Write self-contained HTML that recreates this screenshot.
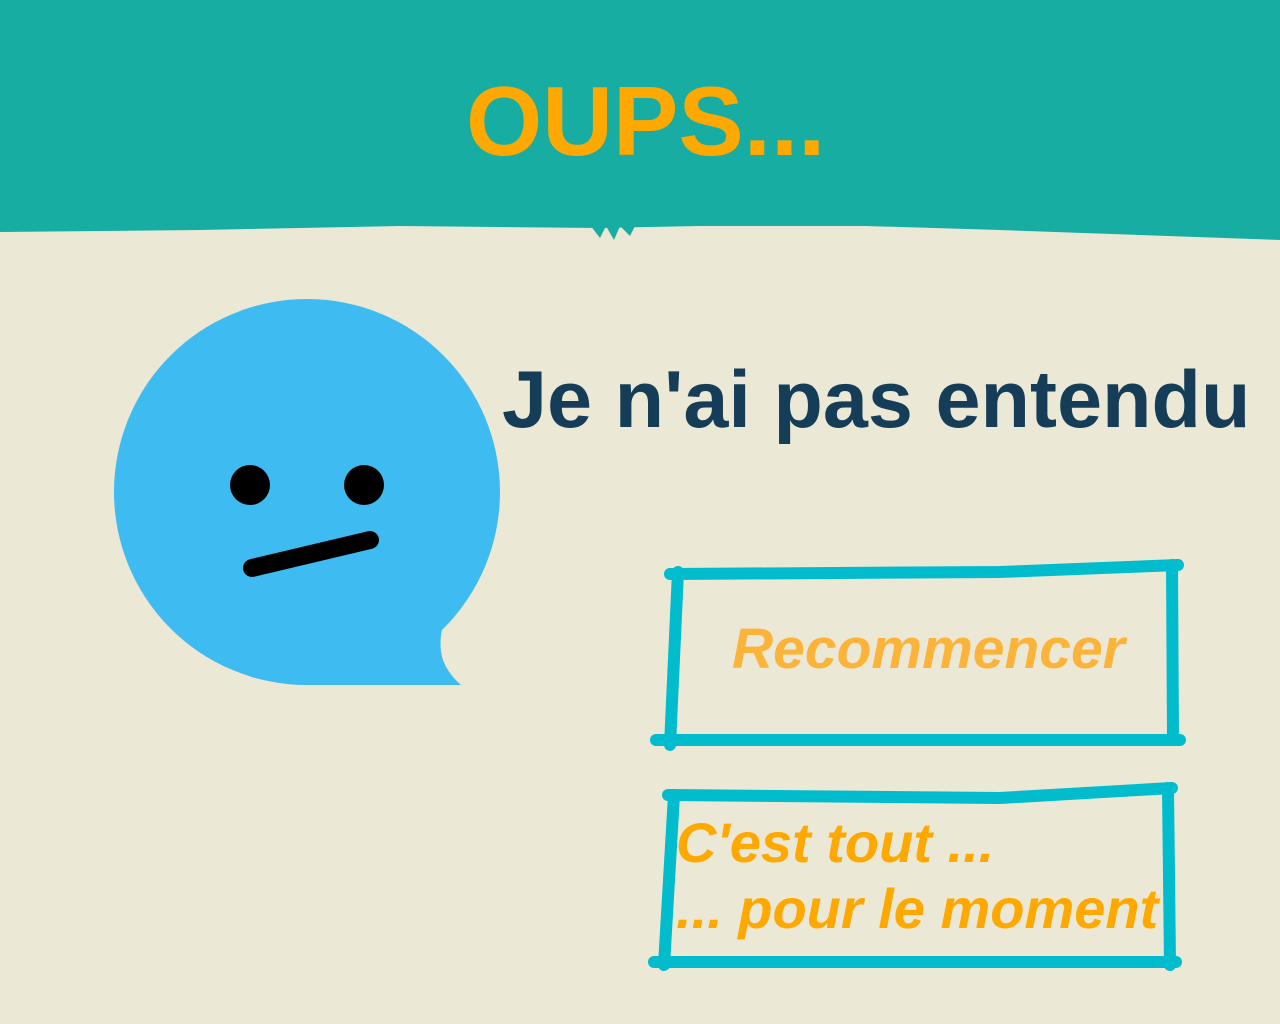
<!DOCTYPE html>
<html><head><meta charset="utf-8"><style>
html,body{margin:0;padding:0;}
body{width:1280px;height:1024px;background:#ebe8d5;position:relative;overflow:hidden;font-family:"Liberation Sans",sans-serif;}
.band{position:absolute;left:0;top:0;width:1280px;height:226px;background:#17ada3;}
.t{position:absolute;white-space:nowrap;}
</style></head><body>
<div class="band"></div>
<svg style="position:absolute;left:0;top:0" width="1280" height="260">
<path d="M0 232 L200 230 L400 226 L600 228 L800 224 L1000 230 L1280 240 L1280 200 L0 200Z" fill="#17ada3"/>
<path d="M590 225 L600 238 L606 226 L614 240 L620 226 L630 236 L636 224Z" fill="#17ada3"/>
</svg>
<div class="t" style="left:466px;top:65px;font-size:98px;font-weight:bold;color:#ffa800;">OUPS...</div>
<svg style="position:absolute;left:0;top:0" width="520" height="700">
<circle cx="307" cy="492" r="193" fill="#3ebbf1"/>
<path d="M307 685 L462 685 Q435 660 442 630 L400 600Z" fill="#3ebbf1"/>
<path d="M462 686 Q432 660 444 628 L470 640Z" fill="#ebe8d5"/>
<circle cx="250" cy="485" r="20" fill="#000"/>
<circle cx="364" cy="485" r="20" fill="#000"/>
<path d="M252 568 L370 540" stroke="#000" stroke-width="18" stroke-linecap="round"/>
</svg>
<div class="t" style="left:502px;top:354px;font-size:81px;font-weight:bold;color:#163d57;">Je n'ai pas entendu</div>
<svg style="position:absolute;left:0;top:0" width="1280" height="1024" fill="none" stroke="#00bccd" stroke-width="12" stroke-linecap="round">
<path d="M670 574 L1000 572 L1178 565"/>
<path d="M678 572 L670 745"/>
<path d="M1172 565 L1173 740"/>
<path d="M656 740 L1180 740"/>
<path d="M668 795 L1000 798 L1172 788"/>
<path d="M674 795 L664 965"/>
<path d="M1168 788 L1170 965"/>
<path d="M654 962 L1176 962"/>
</svg>
<div class="t" style="left:732px;top:616px;font-size:57px;font-weight:bold;font-style:italic;color:#fcb33a;">Recommencer</div>
<div class="t" style="left:676px;top:810px;font-size:56px;font-weight:bold;font-style:italic;color:#ffa800;line-height:66px;">C'est tout ...<br>... pour le moment</div>
</body></html>
